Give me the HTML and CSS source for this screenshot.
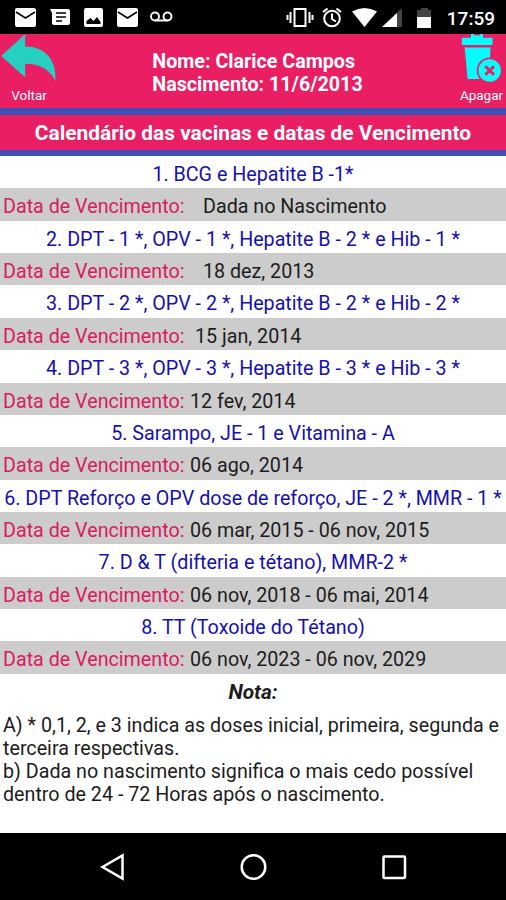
FILE: index.html
```html
<!DOCTYPE html>
<html lang="pt">
<head>
  <meta charset="UTF-8">
  <meta name="viewport" content="width=device-width, initial-scale=1.0">
  <title>Calendário das vacinas</title>
  <link rel="stylesheet" href="styles.css">
</head>
<body>
  <!-- Status bar -->
  <div class="status-bar">
    <svg class="status-icons" width="180" height="34" viewBox="0 0 180 34">
      <g fill="#fff">
        <rect x="15" y="8" width="21" height="19" rx="2"/>
        <path d="M50 9h18a2 2 0 0 1 2 2v12a2 2 0 0 1-2 2H54a2 2 0 0 1-2-2V13z"/>
        <rect x="84" y="8" width="19" height="19" rx="2"/>
        <rect x="117" y="8" width="21" height="19" rx="2"/>
      </g>
      <g fill="none" stroke="#000" stroke-width="1.500">
        <path d="M16 12l9.500 6 9.500-6M118 12l9.500 6 9.500-6"/>
        <path d="M56 13h10M56 17h10M56 21h6"/>
      </g>
      <path d="M86.500 24v-3l4-3 3 3 3.500-4 3.500 5v2z" fill="#000"/>
      <g fill="none" stroke="#fff" stroke-width="1.900">
        <circle cx="155" cy="16.500" r="4"/>
        <circle cx="167.500" cy="16.500" r="4"/>
        <path d="M155 20.500h12.500"/>
      </g>
    </svg>
    <svg class="status-icons" width="150" height="34" viewBox="0 0 150 34">
      <g fill="none" stroke="#fff" stroke-width="2">
        <rect x="9.500" y="9" width="11" height="17"/>
        <path d="M5.500 12v11M24.500 12v11M2.500 15v5M27.500 15v5"/>
        <circle cx="47" cy="18.500" r="7.800"/>
        <path d="M47 13.500v5.500l4 2.500M38 12l4.500-3.500M56 12l-4.500-3.500"/>
      </g>
      <path d="M67 11.500q12.500-7 25 0L79.500 27z" fill="#fff"/>
      <path d="M97 27l20-19v19z" fill="#444"/>
      <path d="M97 27l15-14v14z" fill="#fff"/>
      <path d="M132 10h4V8h7v2h3v8h-14z" fill="#444"/>
      <path d="M132 17h14v11h-14z" fill="#fff"/>
    </svg>
    <span class="clock">17:59</span>
  </div>

  <!-- Child details -->
  <div class="header">
    <div class="action back">
      <svg width="58" height="50" viewBox="0 0 58 50">
        <path d="M0 23L25 0v13c20 0 33 13 31.500 36C51 37 40 31 25 31v14z" fill="#26d0c1"/>
      </svg>
      <span>Voltar</span>
    </div>
    <div class="child">
      Nome: Clarice Campos<br>
      Nascimento: 11/6/2013
    </div>
    <div class="action delete">
      <svg width="49" height="50" viewBox="0 0 49 50">
        <g fill="#0ff">
          <path d="M4 4h9.500V0H26v4h10v7.500H4z"/>
          <path d="M7 14h27l-2 33H10z"/>
          <circle cx="33" cy="38" r="13.500" fill="#e91e63"/>
          <circle cx="33" cy="38" r="11.700"/>
        </g>
        <path d="M17 0v1.500h6V0" fill="#e91e63"/>
        <path d="M28.500 33.500l9 9M37.500 33.500l-9 9" stroke="#e91e63" stroke-width="3"/>
      </svg>
      <span>Apagar</span>
    </div>
  </div>

  <h1>Calendário das vacinas e datas de Vencimento</h1>

  <!-- Vaccine list -->
  <div class="vaccines">
    <div class="vaccine">1. BCG e Hepatite B -1*</div>
    <div class="due"><span class="label">Data de Vencimento:</span><span class="date wide">Dada no Nascimento</span></div>
    <div class="vaccine">2. DPT - 1 *, OPV - 1 *, Hepatite B - 2 * e Hib - 1 *</div>
    <div class="due"><span class="label">Data de Vencimento:</span><span class="date wide">18 dez, 2013</span></div>
    <div class="vaccine">3. DPT - 2 *, OPV - 2 *, Hepatite B - 2 * e Hib - 2 *</div>
    <div class="due"><span class="label">Data de Vencimento:</span><span class="date medium">15 jan, 2014</span></div>
    <div class="vaccine">4. DPT - 3 *, OPV - 3 *, Hepatite B - 3 * e Hib - 3 *</div>
    <div class="due"><span class="label">Data de Vencimento:</span><span class="date">12 fev, 2014</span></div>
    <div class="vaccine">5. Sarampo, JE - 1 e Vitamina - A</div>
    <div class="due"><span class="label">Data de Vencimento:</span><span class="date">06 ago, 2014</span></div>
    <div class="vaccine">6. DPT Reforço e OPV dose de reforço, JE - 2 *, MMR - 1 *</div>
    <div class="due"><span class="label">Data de Vencimento:</span><span class="date">06 mar, 2015 - 06 nov, 2015</span></div>
    <div class="vaccine">7. D &amp; T (difteria e tétano), MMR-2 *</div>
    <div class="due"><span class="label">Data de Vencimento:</span><span class="date">06 nov, 2018 - 06 mai, 2014</span></div>
    <div class="vaccine">8. TT (Toxoide do Tétano)</div>
    <div class="due"><span class="label">Data de Vencimento:</span><span class="date">06 nov, 2023 - 06 nov, 2029</span></div>
  </div>

  <!-- Notes -->
  <div class="notes">
    <h2>Nota:</h2>
    <p>A) * 0,1, 2, e 3 indica as doses inicial, primeira, segunda e<br>terceira respectivas.</p>
    <p>b) Dada no nascimento significa o mais cedo possível<br>dentro de 24 - 72 Horas após o nascimento.</p>
  </div>

  <!-- Navigation bar -->
  <div class="nav-bar">
    <svg width="28" height="28" viewBox="0 0 28 28"><path d="M3.500 14L23.500 2.500v23z"/></svg>
    <svg width="28" height="28" viewBox="0 0 28 28"><circle cx="14.500" cy="14" r="11.800"/></svg>
    <svg width="28" height="28" viewBox="0 0 28 28"><rect x="3.500" y="3.500" width="21.500" height="21.500" rx="1"/></svg>
  </div>
</body>
</html>
```
FILE: styles.css
```css
* {
  margin: 0;
  padding: 0;
  box-sizing: border-box;
}

body {
  display: flex;
  flex-direction: column;
  width: 506px;
  height: 900px;
  overflow: hidden;
  background: #fff;
  color: #1c1c1c;
  font-family: Roboto, sans-serif;
  font-size: 19.7px;
  line-height: 23px;
  white-space: nowrap;
}

svg {
  display: block;
}

.status-bar {
  display: flex;
  height: 34px;
  padding-right: 11px;
  background: #000;
  color: #fff;
}

.status-icons:nth-child(2) {
  margin-left: 105px;
}

.clock {
  margin-left: auto;
  font-size: 19px;
  font-weight: 500;
  line-height: 37px;
}

.header {
  display: flex;
  justify-content: space-between;
  height: 81px;
  background: #e91e63;
  border-bottom: 7px solid #3f51b5;
  color: #fff;
}

.action {
  display: flex;
  flex-direction: column;
  align-items: center;
  width: 58px;
  font-size: 13.5px;
  line-height: 26px;
}

.delete {
  width: 49px;
}

.child {
  padding-top: 16px;
  font-weight: bold;
}

h1 {
  height: 41px;
  background: #e91e63;
  border-bottom: 6px solid #3f51b5;
  color: #fff;
  text-align: center;
  font-size: 20.9px;
  line-height: 36px;
}

.vaccines {
  display: grid;
  grid-template-rows: repeat(16, 32.36px);
  line-height: 37px;
}

.vaccine {
  color: #1510b0;
  text-align: center;
}

.due {
  display: flex;
  padding-left: 3px;
  background: #ccc;
}

.label {
  width: 187px;
  color: #d81b60;
}

.wide {
  padding-left: 13px;
}

.medium {
  padding-left: 5px;
}

.notes {
  flex: 1;
  padding: 7px 3px 0;
}

h2 {
  margin-bottom: 10px;
  text-align: center;
  font-size: 20.9px;
  font-style: italic;
}

.nav-bar {
  display: flex;
  justify-content: center;
  align-items: center;
  gap: 112.5px;
  height: 67px;
  background: #000;
}

.nav-bar svg {
  fill: none;
  stroke: #fff;
  stroke-width: 2.5;
}
```
